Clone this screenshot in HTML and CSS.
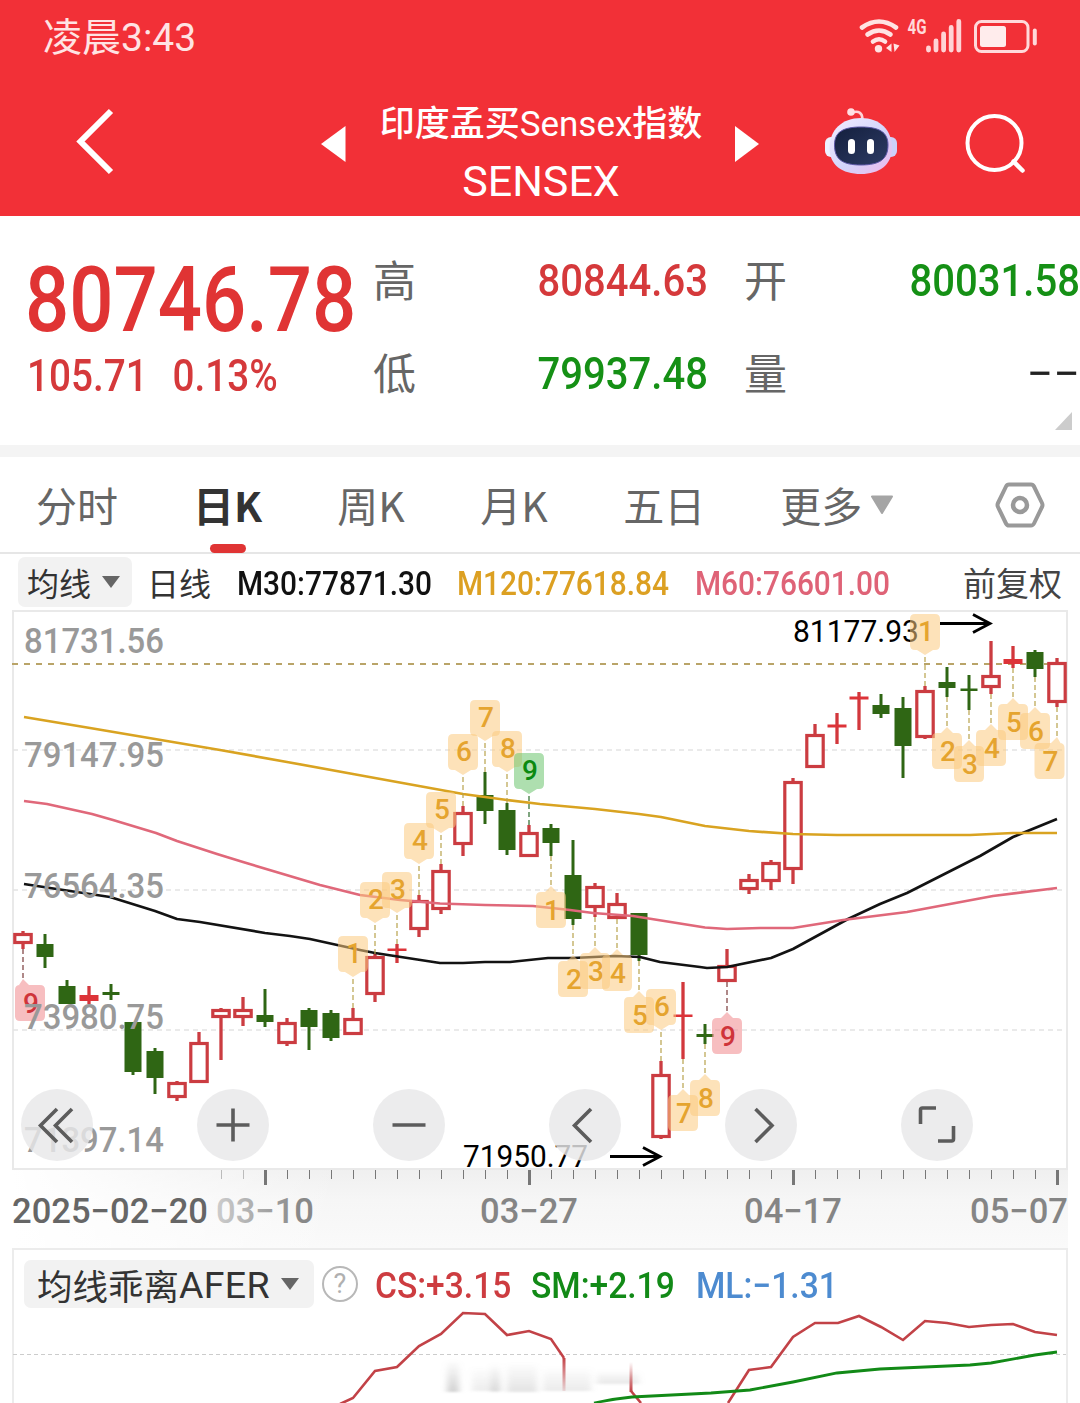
FILE: index.html
```html
<!DOCTYPE html>
<html lang="zh-CN">
<head>
  <meta charset="UTF-8" />
  <meta name="viewport" content="width=device-width, initial-scale=1.0" />
  <title>印度孟买Sensex指数</title>
  <link rel="stylesheet" href="styles.css">
</head>
<body>
  <header class="header">
    <div class="status">
      <span class="clock">凌晨3:43</span>
      <svg class="status-icons" width="180" height="40" viewBox="858 16 180 40">
        <g fill="none" stroke="#ffe3e3" stroke-width="4.6" stroke-linecap="round">
          <path d="M862 27.5Q879 15.500 896 27.500" />
          <path d="M867.500 34.500Q879 26.500 890.500 34.500" />
          <path d="M873 41.500Q879 37 885 41.500" />
        </g>
        <circle cx="878.500" cy="48.700" r="3.700" fill="#ffe3e3" />
        <path d="M891.500 43.500v8.500l-5.500-4zM893.500 43.500l6 2-5 6.500z" fill="#ffe3e3" />
        <text x="907.500" y="34" class="net" textLength="19" lengthAdjust="spacingAndGlyphs">4G</text>
        <g stroke="#ffd3d5" stroke-width="4.800" stroke-linecap="round">
          <path d="M928.500 48v2M936 41v9M943.600 34v16M951.200 27.500v22.500M958.800 21.500v28.500" />
        </g>
        <rect x="975.500" y="21.500" width="52.500" height="30" rx="6" fill="none" stroke="#ffd9da" stroke-width="3" />
        <rect x="980" y="26" width="26" height="21" rx="2.500" fill="#ffecec" />
        <path d="M1034.800 30.500v13" stroke="#ffd9da" stroke-width="4" stroke-linecap="round" />
      </svg>
    </div>
    <div class="title-bar">
      <svg class="back" width="40" height="68" viewBox="74 107 40 68"><path d="M111 111L80.500 141.500 111 172" fill="none" stroke="#fff" stroke-width="6" /></svg>
      <svg class="prev" width="26" height="38" viewBox="0 0 26 38"><path d="M0 19L24.500 1v36z" fill="#fff" /></svg>
      <div class="title">
        <div class="title-name">印度孟买<span class="sensex">Sensex</span>指数</div>
        <div class="title-code">SENSEX</div>
      </div>
      <svg class="next" width="26" height="38" viewBox="0 0 26 38"><path d="M24 19L0 1v36z" fill="#fff" /></svg>
      <svg class="robot" width="76" height="70" viewBox="823 106 76 70">
        <defs>
          <linearGradient id="head" x1="0" y1="0" x2="1" y2="1">
            <stop offset="0" stop-color="#f4edff" /><stop offset=".55" stop-color="#d3d5fb" /><stop offset="1" stop-color="#eeb8ea" />
          </linearGradient>
          <linearGradient id="face" x1="0" y1="0" x2="1" y2="1">
            <stop offset="0" stop-color="#141f3e" /><stop offset="1" stop-color="#2d3c64" />
          </linearGradient>
        </defs>
        <path d="M852 112.500Q862 109.500 862.500 119" fill="none" stroke="#ffd3d8" stroke-width="2.600" />
        <circle cx="851" cy="112" r="3.800" fill="#ffdfe3" />
        <rect x="825" y="137" width="14" height="20" rx="6" fill="#eef1ff" />
        <rect x="883" y="137" width="14" height="20" rx="6" fill="#cdd0fa" />
        <path d="M861 118C880 118 892 130 892 148C892 165 879 174 861 174C842 174 829.500 165 829.500 148C829.500 130 842 118 861 118Z" fill="url(#head)" />
        <path d="M861 127C879 127 888 132 888 145C888 159 880 165 861 165C842 165 834.500 159 834.500 145C834.500 132 843 127 861 127Z" fill="url(#face)" stroke="#5d58a8" stroke-width="1" />
        <rect x="848" y="139" width="7" height="15" rx="3.500" fill="#fff" />
        <rect x="867" y="139" width="7" height="15" rx="3.500" fill="#fff" />
      </svg>
      <svg class="search" width="64" height="64" viewBox="964 112 64 64">
        <circle cx="994.500" cy="143" r="27" fill="none" stroke="#fff" stroke-width="4" />
        <path d="M1013.500 161.500l9 9" stroke="#fff" stroke-width="4.500" stroke-linecap="round" />
      </svg>
    </div>
  </header>

  <section class="quote">
    <div class="price">
      <div class="price-last">80746.78</div>
      <div class="price-change"><span>105.71</span><span>0.13%</span></div>
    </div>
    <div class="stats">
      <span class="stat-label">高</span><span class="stat up">80844.63</span>
      <span class="stat-label">开</span><span class="stat down">80031.58</span>
      <span class="stat-label">低</span><span class="stat down">79937.48</span>
      <span class="stat-label">量</span><span class="stat none">−−</span>
    </div>
    <i class="corner"></i>
  </section>

  <nav class="tabs">
    <span class="tab">分时</span>
    <span class="tab active">日K</span>
    <span class="tab">周K</span>
    <span class="tab">月K</span>
    <span class="tab">五日</span>
    <span class="tab more">更多<svg width="24" height="20" viewBox="0 0 24 20"><path d="M2 1.500h20L12 18z" fill="#a5a5a5" stroke="#a5a5a5" stroke-linejoin="round" stroke-width="2" /></svg></span>
    <svg class="settings" width="52" height="50" viewBox="994 480 52 50">
      <path d="M1009 484.500h22q2 0 3 2l8 16.500q1 2 0 4l-8 16.500q-1 2-3 2h-22q-2 0-3-2l-8-16.500q-1-2 0-4l8-16.500q1-2 3-2z" fill="none" stroke="#999" stroke-width="4" />
      <circle cx="1020" cy="505" r="7" fill="none" stroke="#999" stroke-width="4.500" />
    </svg>
  </nav>

  <div class="legend">
    <span class="pill">均线<svg width="20" height="14" viewBox="0 0 20 14"><path d="M1 1h18l-9 12z" fill="#666" /></svg></span>
    <span class="period">日线</span>
    <span class="ma m30">M30:77871.30</span>
    <span class="ma m120">M120:77618.84</span>
    <span class="ma m60">M60:76601.00</span>
    <span class="adjust">前复权</span>
  </div>

  <section class="chart">
    <svg id="kline" width="1080" height="638" viewBox="0 610 1080 638"></svg>
    <div class="controls">
      <button><svg viewBox="0 0 72 72"><path d="M36 20L19.500 36.500 36 53M51 20L34.500 36.500 51 53" /></svg></button>
      <button><svg viewBox="0 0 72 72"><path d="M19.500 36h33M36 19.500v33" /></svg></button>
      <button><svg viewBox="0 0 72 72"><path d="M19.500 36h33" /></svg></button>
      <button><svg viewBox="0 0 72 72"><path d="M42 20L25.500 36.500 42 53" /></svg></button>
      <button><svg viewBox="0 0 72 72"><path d="M30.500 20L47 36.500 30.500 53" /></svg></button>
      <button><svg viewBox="0 0 72 72"><path d="M19.500 35V21q0-2 2-2h13.500M37 52h13.500q2 0 2-2V37" /></svg></button>
    </div>
  </section>

  <section class="indicator">
    <div class="indicator-head">
      <span class="pill big">均线乖离<span class="afer">AFER</span><svg width="20" height="14" viewBox="0 0 20 14"><path d="M1 1h18l-9 12z" fill="#666" /></svg></span>
      <span class="help">?</span>
      <span class="val cs">CS:+3.15</span>
      <span class="val sm">SM:+2.19</span>
      <span class="val ml">ML:−1.31</span>
    </div>
    <svg class="indicator-plot" width="1080" height="95" viewBox="0 1308 1080 95">
      <defs>
        <filter id="soft" x="-20%" y="-20%" width="140%" height="140%"><feGaussianBlur stdDeviation="3 1" /></filter>
        <linearGradient id="smear" x1="0" y1="0" x2="0" y2="1">
          <stop offset="0" stop-color="#999" stop-opacity="0" /><stop offset="1" stop-color="#999" stop-opacity=".45" />
        </linearGradient>
        <linearGradient id="fade" gradientUnits="userSpaceOnUse" x1="0" y1="1358" x2="0" y2="1391">
          <stop offset="0" stop-color="#c24247" /><stop offset="1" stop-color="#c24247" stop-opacity=".15" />
        </linearGradient>
        <linearGradient id="rise" gradientUnits="userSpaceOnUse" x1="0" y1="1362" x2="0" y2="1391">
          <stop offset="0" stop-color="#c24247" stop-opacity="0" /><stop offset="1" stop-color="#c24247" />
        </linearGradient>
      </defs>
      <path d="M13 1354.500H1066" stroke="#ccc" stroke-dasharray="4 3" />
      <g fill="url(#smear)" filter="url(#soft)">
        <rect x="447" y="1360" width="12" height="32" />
        <rect x="472" y="1366" width="30" height="25" opacity=".4" />
        <rect x="491" y="1362" width="8" height="30" opacity=".6" />
        <rect x="507" y="1362" width="30" height="30" opacity=".6" />
        <rect x="543" y="1366" width="48" height="25" opacity=".45" />
        <rect x="597" y="1370" width="42" height="14" opacity=".5" />
      </g>
      <g fill="none" stroke="#c24247" stroke-width="2.600">
        <path d="M340 1404L353 1398 375 1371 397 1367 419 1346 441 1334 463 1313 485 1314 507 1335 529 1331 551 1339 564 1358" />
        <path d="M631 1391l10 12M728 1403L749 1370 771 1367 793 1337 815 1323 838 1323 859 1316 881 1327 903 1340 925 1321 947 1323 969 1327 991 1325 1013 1324 1035 1332 1057 1335" />
      </g>
      <rect x="562.500" y="1358" width="3" height="33" fill="url(#fade)" />
      <rect x="629.500" y="1362" width="3" height="30" fill="url(#rise)" />
      <path d="M594 1403Q612 1399 632 1397L711 1393 750 1390 793 1382 837 1373 880 1369 970 1365 991 1363 1035 1355 1057 1352" fill="none" stroke="#128a17" stroke-width="2.800" />
    </svg>
  </section>

  <script src="chart.js"></script>
</body>
</html>
```
FILE: styles.css
```css
*, *::before, *::after { box-sizing: border-box; }
body {
  margin: 0;
  width: 1080px;
  height: 1403px;
  overflow: hidden;
  background: #fff;
  font-family: Roboto, "Noto Sans CJK SC", sans-serif;
  color: #333;
}
svg { display: block; flex: none; }

/* header */
.header {
  height: 216px;
  background: #f23037;
  color: #fff;
}
.status {
  height: 76px;
  padding: 0 42px 0 43px;
  display: flex;
  justify-content: space-between;
  align-items: center;
}
.clock {
  font-size: 39px;
  line-height: 78px;
  color: #ffe3e3;
}
.status-icons { margin-bottom: 4px; }
.net {
  font-size: 20px;
  font-weight: 700;
  fill: #ffd9da;
}
.title-bar {
  height: 140px;
  padding-left: 74px;
  display: flex;
  align-items: center;
}
.back { margin-bottom: 10px; }
.prev { margin: 0 0 4px 207px; }
.title {
  width: 388px;
  padding-top: 14px;
  text-align: center;
  white-space: nowrap;
}
.title-name {
  font-size: 35px;
  font-weight: 500;
  line-height: 56px;
}
.sensex { font-weight: 400; }
.title-code {
  font-size: 43px;
  line-height: 56px;
}
.next { margin-bottom: 4px; }
.robot { margin: 0 0 10px 62px; }
.search { margin: 0 0 4px 65px; }

/* quote */
.quote {
  position: relative;
  height: 241px;
  padding: 18px 0 0 27px;
  border-bottom: 12px solid #f4f4f4;
  display: flex;
}
.price {
  width: 346px;
  color: #e03434;
  white-space: nowrap;
}
.price-last {
  margin-left: -2px;
  font-size: 90px;
  font-weight: 500;
  line-height: 134px;
  transform: scaleX(.865);
  transform-origin: left;
}
.price-change {
  display: flex;
  gap: 28px;
  font-size: 44px;
  line-height: 16px;
  color: #d5393b;
  transform: scaleX(.88);
  transform-origin: left;
}
.price-change, .stat, .ma, .val { font-weight: 500; }
.stats {
  display: grid;
  grid-template-columns: 43px 292px 43px 292px;
  grid-template-rows: 93px 93px;
  align-items: center;
}
.stats .stat-label:nth-of-type(4n+3) { margin-left: 36px; }
.stat-label {
  font-size: 43px;
  line-height: 60px;
  color: #666;
  white-space: nowrap;
}
.stat-label { padding-bottom: 0; margin-top: 3px; }
.stat {
  font-size: 45px;
  text-align: right;
  transform: scaleX(.89);
  transform-origin: right;
}
.stat.down:nth-of-type(4n), .stat.none { margin-right: -37px; }
.stat.none { font-weight: 400; transform: scaleX(1.04); }
.up { color: #d5393b; }
.down { color: #159015; }
.none { color: #222; }
.corner {
  position: absolute;
  right: 8px;
  bottom: 15px;
  border-left: 17px solid transparent;
  border-bottom: 18px solid #ccc;
}

/* tabs */
.tabs {
  height: 97px;
  padding-left: 36px;
  border-bottom: 2px solid #e6e6e6;
  display: flex;
  align-items: center;
  gap: 75px;
}
.tab {
  position: relative;
  min-width: 68px;
  font: 41px/97px "Noto Sans CJK SC", sans-serif;
  color: #666;
  white-space: nowrap;
}
.tab.active {
  color: #333;
  font-weight: 700;
}
.tab.active::after {
  content: "";
  position: absolute;
  left: 17px;
  bottom: 0;
  width: 36px;
  height: 9px;
  border-radius: 5px;
  background: #e03434;
}
.more {
  display: flex;
  align-items: center;
  gap: 8px;
}
.settings { margin-left: 25px; }

/* moving average legend */
.legend {
  height: 56px;
  padding: 3px 18px 3px;
  display: flex;
  align-items: center;
  font-size: 32px;
  white-space: nowrap;
}
.pill {
  display: flex;
  align-items: center;
  gap: 10px;
  width: 114px;
  height: 50px;
  padding-left: 9px;
  border-radius: 7px;
  background: #f2f2f2;
}
.period { margin-left: 15px; width: 90px; }
.ma {
  padding-top: 2px;
  font-size: 33px;
  transform: scaleX(.905);
  transform-origin: left;
}
.m30 { width: 220px; color: #111; }
.m120 { width: 238px; color: #dca022; }
.m60 { width: 268px; color: #df6377; }
.adjust { color: #444; font-size: 33px; }

/* candlestick chart */
.chart {
  position: relative;
  height: 638px;
}
.controls {
  position: absolute;
  left: 21px;
  top: 479px;
  display: flex;
  gap: 104px;
}
.controls button {
  width: 72px;
  height: 72px;
  padding: 0;
  border: 0;
  border-radius: 50%;
  background: rgba(232, 232, 233, .82);
}
.controls path {
  fill: none;
  stroke: #5c5c5c;
  stroke-width: 3.6;
}
#kline text { font-family: Roboto, sans-serif; }
.axis { font-size: 35px; font-weight: 500; fill: #999; }
.date { font-size: 35px; font-weight: 500; fill: #858585; }
.date.first { fill: #666; }
.peak { font-size: 31px; fill: #000; }
.badge { font-size: 28px; font-weight: 500; text-anchor: middle; }

/* indicator */
.indicator {
  position: relative;
  height: 155px;
}
.indicator::before {
  content: "";
  position: absolute;
  left: 12px;
  right: 12px;
  top: 0;
  bottom: 0;
  border: 2px solid #ececec;
  border-bottom: 0;
}
.indicator-head {
  position: relative;
  height: 60px;
  padding: 12px 0 0 24px;
  display: flex;
  align-items: center;
  white-space: nowrap;
}
.pill.big {
  width: 290px;
  height: 48px;
  padding-left: 13px;
  gap: 0;
  font-size: 35.5px;
}
.afer {
  width: 101px;
  padding-top: 2px;
  font-size: 37.5px;
  letter-spacing: .3px;
}
.help {
  width: 36px;
  height: 36px;
  margin: 0 17px 0 8px;
  border: 2.5px solid #b8b8b8;
  border-radius: 50%;
  color: #b0b0b0;
  font-size: 27px;
  line-height: 32px;
  text-align: center;
}
.val {
  padding-top: 2px;
  font-size: 36.5px;
  transform: scaleX(.92);
  transform-origin: left;
}
.cs { width: 156px; color: #cd3c40; }
.sm { width: 165px; color: #128a17; }
.ml { color: #4d8bd0; }
.indicator-plot { position: relative; }
```
FILE: chart.js
```js
// kind, high, body top, body bottom, low
const candles = [
  ['r', 931, 933, 944, 949], ['g', 934, 944, 957, 968], ['g', 980, 986, 1004, 1004], ['r', 986, 995, 1001, 1004],
  ['g', 984, 992, 995, 1000], ['g', 1022, 1022, 1072, 1075], ['g', 1048, 1051, 1078, 1094], ['r', 1081, 1082, 1098, 1101],
  ['r', 1032, 1042, 1083, 1083], ['r', 1008, 1009, 1018, 1060], ['r', 997, 1009, 1018, 1026], ['g', 989, 1015, 1022, 1027],
  ['r', 1018, 1022, 1044, 1046], ['g', 1008, 1010, 1027, 1050], ['g', 1010, 1013, 1038, 1041], ['r', 1008, 1018, 1035, 1035],
  ['r', 954, 956, 995, 1002], ['r', 944, 948.5, 951, 963], ['r', 895, 900, 930, 937], ['r', 864, 870, 910, 914],
  ['r', 806, 812, 845, 856], ['g', 772, 795, 811, 824], ['g', 803, 810, 850, 855], ['r', 825, 832, 857, 857],
  ['g', 824, 828, 843, 856], ['g', 840, 875, 919, 925], ['r', 883, 886, 908, 917], ['r', 893, 903, 919, 919],
  ['g', 913, 913, 955, 961], ['r', 1061, 1074, 1138, 1139], ['r', 982, 1014.5, 1017, 1059], ['g', 1024, 1034, 1037, 1044],
  ['r', 949, 965, 982, 982], ['r', 874, 879, 890, 894], ['r', 860, 862, 882, 890], ['r', 778, 781, 870, 884],
  ['r', 724, 734, 768, 768], ['r', 713, 724.5, 727.5, 744], ['r', 692, 696.5, 699.5, 730], ['g', 694, 705, 714, 718],
  ['g', 697, 708, 746, 778], ['r', 686, 690, 738, 739], ['g', 667, 682, 688, 697], ['g', 675, 688.5, 691, 710],
  ['r', 641, 675, 688, 694], ['r', 646, 659, 664, 668], ['g', 650, 652, 669, 677], ['r', 658, 662, 703, 707]
];

// candle index, digit, side, palette
const signals = [
  [0, 9, 'down', 'red'],
  [15, 1, 'up', 'gold'], [16, 2, 'up', 'gold'], [17, 3, 'up', 'gold'], [18, 4, 'up', 'gold'], [19, 5, 'up', 'gold'],
  [20, 6, 'up', 'gold'], [21, 7, 'up', 'gold'], [22, 8, 'up', 'gold'], [23, 9, 'up', 'green'],
  [24, 1, 'down', 'gold'], [25, 2, 'down', 'gold'], [26, 3, 'down', 'gold'], [27, 4, 'down', 'gold'], [28, 5, 'down', 'gold'],
  [29, 6, 'up', 'gold'], [30, 7, 'down', 'gold'], [31, 8, 'down', 'gold'], [32, 9, 'down', 'red'],
  [41, 1, 'up', 'gold'], [42, 2, 'down', 'gold'], [43, 3, 'down', 'gold'], [44, 4, 'down', 'gold'],
  [45, 5, 'down', 'gold'], [46, 6, 'down', 'gold'], [47, 7, 'down', 'gold']
];
const palette = {
  gold: ['#fbcb80', '#e5a42f', '#b8a24c'],
  green: ['#6cc46e', '#0b8a10', '#2b6b2b'],
  red: ['#f0888c', '#cf343a', '#7a3a3a']
};

const lines = {
  '#131313': '24,884 50,888 110,897 155,911 177,919 200,922 265,933 290,936 310,939 360,950 375,953 440,963 463,963 485,962 510,962 548,958 573,958 615,956 640,957 660,962 700,967 707,968 727,967 771,958 793,949 848,919 880,904 907,893 980,856 1013,837 1057,819',
  '#e0687a': '24,801 47,804 92,814 113,820 156,833 177,841 217,854 243,862 283,874 320,885 360,895 400,900 440,903.5 485,905 533,906 570,910 593,913 633,916 705,927.5 727,929 760,928 793,928 843,920 907,912 993,896 1057,888',
  '#d9a321': '24,717 90,728 155,739 220,750 287,762 353,774 419,786 463,794 507,800 540,804 595,809 639,814 661,817 705,826 749,831 793,834 837,835 970,835 1013,833 1057,833'
};

const cx = i => 23 + 22 * i;
const label = (cls, x, y, len, str, extra = '') =>
  `<text class="${cls}" x="${x}" y="${y}" textLength="${len}" lengthAdjust="spacingAndGlyphs" ${extra}>${str}</text>`;

let out = `
  <defs>
    <linearGradient id="axisBg" x1="0" y1="0" x2="0" y2="1">
      <stop offset="0" stop-color="#efefef" /><stop offset=".4" stop-color="#f6f6f6" /><stop offset="1" stop-color="#fafafa" />
    </linearGradient>
    <linearGradient id="axisFade" x1="0" y1="0" x2="1" y2="0">
      <stop offset="0" stop-color="#fff" /><stop offset="1" stop-color="#fff" stop-opacity="0" />
    </linearGradient>
    <linearGradient id="dateFade" gradientUnits="userSpaceOnUse" x1="217" y1="0" x2="300" y2="0">
      <stop offset="0" stop-color="#ccc" /><stop offset="1" stop-color="#888" />
    </linearGradient>
  </defs>
  <rect x="12" y="1168" width="1056" height="80" fill="url(#axisBg)" />
  <rect x="12" y="1168" width="330" height="80" fill="url(#axisFade)" />
  <path d="M13 1169V611H1067V1169M12 1169H1068" fill="none" stroke="#e9e9e9" stroke-width="2" />
  <path d="M13 750H1066M13 890H1066M13 1030H1066" stroke="#e4e4e4" stroke-width="1.500" stroke-dasharray="5 4" />
  <path d="M12 664H1066" stroke="#b9a468" stroke-width="1.800" stroke-dasharray="6 6" />`;

candles.forEach(([kind, high, top, bottom, low], i) => {
  const x = cx(i);
  const h = bottom - top;
  if (kind === 'g') {
    out += `<path d="M${x} ${high}V${low}" stroke="#2f6614" stroke-width="3" />
      <rect x="${x - 8.5}" y="${top}" width="17" height="${h}" fill="#2f6614" />`;
  } else if (h < 7) {
    out += `<path d="M${x} ${high}V${low}" stroke="#d2373c" stroke-width="3.300" />
      <rect x="${x - 9.5}" y="${top}" width="19" height="${h}" fill="#dd3338" />`;
  } else {
    out += `<path d="M${x} ${high}V${top}M${x} ${bottom}V${low}" stroke="#cb3c41" stroke-width="3.300" />
      <rect x="${x - 8.2}" y="${top + 1.5}" width="16.400" height="${h - 3}" fill="#fff" stroke="#cb3c41" stroke-width="3.200" />`;
  }
});

for (const color in lines) {
  out += `<polyline points="${lines[color]}" fill="none" stroke="${color}" stroke-width="2.700" stroke-linejoin="round" />`;
}

out += label('peak', 793, 642, 126, '81177.93') + label('peak', 463, 1167, 125, '71950.77');
out += `<path d="M940 623.500H990M973 614.500L990 623.500 973 632.500M610 1156.500H660M643 1147.500L660 1156.500 643 1165.500" fill="none" stroke="#000" stroke-width="2.800" />`;

signals.forEach(([i, digit, side, tone]) => {
  const [bg, fg, dash] = palette[tone];
  const x = cx(i);
  const left = Math.min(Math.max(x - 15, 15), 1034.5);
  const [, high, , , low] = candles[i];
  if (side === 'up') {
    const top = high - 72;
    out += `<path d="M${x} ${high}V${top + 41}" stroke="${dash}" stroke-width="1.200" stroke-dasharray="5 3" />
      <path d="M${left + 5} ${top}h20q5 0 5 5v26q0 5-5 5h-2l-8 5-8-5h-2q-5 0-5-5v-26q0-5 5-5z" fill="${bg}" fill-opacity=".55" />
      <text class="badge" x="${left + 16}" y="${top + 27}" fill="${fg}">${digit}</text>`;
  } else {
    const end = low + 72;
    out += `<path d="M${x} ${low}V${end - 42}" stroke="${dash}" stroke-width="1.200" stroke-dasharray="5 3" />
      <path d="M${left + 5} ${end}h20q5 0 5-5v-26q0-5-5-5H${Math.min(x + 6, left + 26)}L${x} ${end - 42}L${Math.max(x - 6, left + 4)} ${end - 36}H${left + 5}q-5 0-5 5v26q0 5 5 5z" fill="${bg}" fill-opacity=".55" />
      <text class="badge" x="${left + 16}" y="${end - 8}" fill="${fg}">${digit}</text>`;
  }
});

[['81731.56', 653], ['79147.95', 767], ['76564.35', 898], ['73980.75', 1029], ['71397.14', 1152]]
  .forEach(([str, y]) => { out += label('axis', 24, y, 140, str); });

for (let x = 221; x <= 1057; x += 22) {
  const major = (x - 265) % 264 === 0;
  out += `<path d="M${x + .5} 1170v${major ? 15 : 9}" stroke="${x < 250 ? '#bbb' : '#777'}" stroke-width="${major ? 3 : 1}" />`;
}

out += label('date first', 12, 1223, 196, '2025−02−20');
out += label('date', 216, 1223, 98, '03−10', 'style="fill:url(#dateFade)"');
out += label('date', 480, 1223, 98, '03−27') + label('date', 744, 1223, 98, '04−17') + label('date', 970, 1223, 98, '05−07');

document.getElementById('kline').innerHTML = out;
```
